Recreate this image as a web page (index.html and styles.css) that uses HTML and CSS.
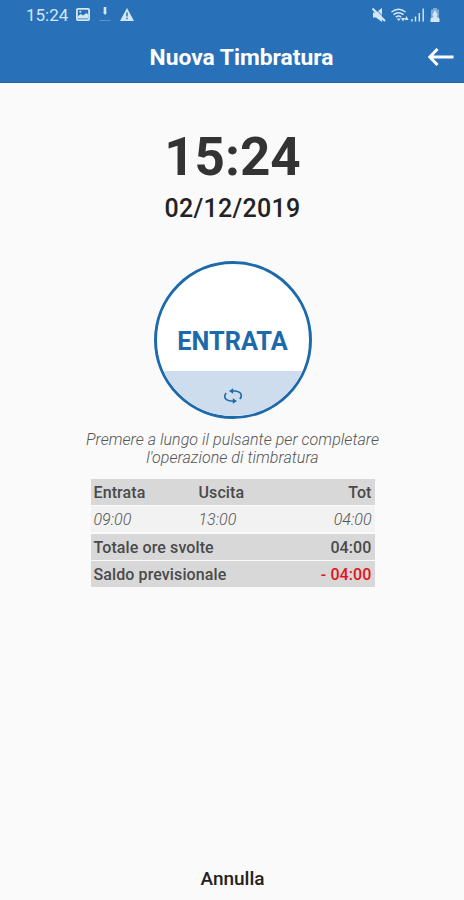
FILE: index.html
```html
<!DOCTYPE html>
<html lang="it">
<head>
    <meta charset="UTF-8">
    <meta name="viewport" content="width=device-width, initial-scale=1.0">
    <title>Nuova Timbratura</title>
    <link rel="stylesheet" href="styles.css">
</head>
<body>

<header class="header">
    <div class="status-bar">
        <span class="status-time">15:24</span>
        <svg class="icon-image" width="14" height="13" viewBox="0 0 14 13">
            <rect x="0.9" y="0.9" width="12.2" height="11.2" rx="1" fill="none" stroke="currentColor" stroke-width="1.8"/>
            <path d="M2 10.5V8l3-2 2 1.5L10.500 5 12 6.500v4z" fill="currentColor"/>
            <circle cx="4.300" cy="3.800" r="1" fill="currentColor"/>
        </svg>
        <svg class="icon-download" width="12" height="15" viewBox="0 0 12 15">
            <path d="M4.700 0h2.600v5.500h0.700L6 8 4 5.500h0.700z" fill="currentColor"/>
            <path d="M0.500 13.500h11" stroke="currentColor" opacity="0.3"/>
        </svg>
        <svg class="icon-warning" width="14" height="13" viewBox="0 0 14 13">
            <path d="M7 0l7 13H0z" fill="currentColor"/>
            <path d="M7 4.500v4M7 9.700v1.600" stroke="#2871b8" stroke-width="1.500"/>
        </svg>
        <div class="status-right">
            <svg width="14" height="14" viewBox="0 0 14 14">
                <path d="M1 4.500h3L10 0v14L4 9.500H1z" fill="currentColor"/>
                <path d="M2.500 0l12 12" stroke="#2871b8" stroke-width="1"/>
                <path d="M0.500 0.500l12.500 12.500" stroke="currentColor" stroke-width="2"/>
            </svg>
            <svg class="icon-wifi" width="18" height="14" viewBox="0 0 18 14">
                <g fill="none" stroke="currentColor" stroke-width="1.500">
                    <path d="M0.500 4q7-5.500 14 0"/>
                    <path d="M2.500 6.700q5-4 10 0"/>
                    <path d="M4.800 9.200q2.700-2.200 5.400 0"/>
                </g>
                <path d="M5.700 10.500h4L7.700 13z" fill="currentColor"/>
                <path d="M10 10L12 13.500 14 10zM13.500 12L15.500 8 17.500 12z" fill="currentColor"/>
            </svg>
            <svg class="icon-signal" width="14" height="14" viewBox="0 0 14 14">
                <path d="M1 11v2.500M4.500 8.500v5M8.300 5v8.500M12.200 0.500v13" stroke="currentColor" stroke-width="1.400"/>
            </svg>
            <svg class="icon-battery" width="10" height="14" viewBox="0 0 10 14">
                <path d="M3 0h4v1.500h2V14H1V1.500h2z" fill="currentColor" opacity="0.500"/>
                <path d="M5 2l2.500 4.500L6.500 9 9.500 10.500V14h-9v-3.500L3.500 9l-1-2.500z" fill="currentColor"/>
            </svg>
        </div>
    </div>
    <div class="title-bar">
        <h1>Nuova Timbratura</h1>
        <svg class="back-arrow" width="27" height="20" viewBox="0 0 27 20">
            <path d="M25.500 10H2.500M9.500 2L1.800 10l7.700 8" fill="none" stroke="#fff" stroke-width="3"/>
        </svg>
    </div>
</header>

<main class="content">
    <div class="clock">15:24</div>
    <div class="date">02/12/2019</div>

    <button class="stamp-button" type="button">
        <span class="stamp-label">ENTRATA</span>
        <span class="stamp-switch">
            <svg width="20" height="16" viewBox="0 0 20 16">
                <g fill="none" stroke="#1c69ab" stroke-width="1.700">
                    <path d="M8 3h4.500q5.500 0.800 5.800 4.500 0 2-1.500 3.500"/>
                    <path d="M12 13H7.500Q2 12.200 1.700 8.500q0-2 1.500-3.500"/>
                </g>
                <path d="M10.200 0.300v5.400L6 3zM9.800 10.300v5.400L14 13z" fill="#1c69ab"/>
            </svg>
        </span>
    </button>

    <p class="hint">Premere a lungo il pulsante per completare<br>l'operazione di timbratura</p>

    <div class="summary">
        <div class="row bold">
            <span>Entrata</span><span>Uscita</span><span class="tot">Tot</span>
        </div>
        <div class="row times">
            <span>09:00</span><span>13:00</span><span class="tot">04:00</span>
        </div>
        <div class="row bold">
            <span class="wide">Totale ore svolte</span><span class="tot">04:00</span>
        </div>
        <div class="row bold">
            <span class="wide">Saldo previsionale</span><span class="tot negative">- 04:00</span>
        </div>
    </div>
</main>

<footer class="footer">Annulla</footer>

</body>
</html>
```
FILE: styles.css
```css
* {
    box-sizing: border-box;
}
body {
    font-family: Roboto, sans-serif;
    background-color: #fafafa;
    display: flex;
    flex-direction: column;
    height: 900px;
    margin: 0;
    color: #222;
}
.header {
    background-color: #2871b8;
    height: 83px;
    border-bottom: 1px solid #1763a9;
    color: #d3e7f6;
}
.status-bar {
    display: flex;
    align-items: center;
    height: 29px;
    padding: 0 24px 0 26px;
}
.status-time {
    font-size: 17px;
    line-height: 29px;
    width: 50px;
    padding-top: 1px;
}
.icon-download {
    margin-left: 9px;
}
.icon-warning {
    margin-left: 9px;
}
.status-right {
    display: flex;
    align-items: center;
    margin-left: auto;
}
.icon-wifi {
    margin-left: 5px;
}
.icon-signal {
    margin-left: 2px;
}
.icon-battery {
    margin-left: 5px;
}
.title-bar {
    display: grid;
    grid-template-columns: 1fr auto 1fr;
    align-items: center;
    height: 54px;
    padding: 0 9px;
}
h1 {
    grid-column: 2;
    margin: 2px 0 0 19px;
    font-size: 22.8px;
    line-height: 54px;
    color: #fff;
}
.back-arrow {
    justify-self: end;
}
.content {
    flex: 1;
    display: flex;
    flex-direction: column;
    align-items: center;
    padding-left: 1px;
}
.clock {
    margin-top: 43px;
    font-size: 53px;
    font-weight: bold;
    line-height: 62px;
    color: #333;
}
.date {
    margin-top: 5px;
    font-size: 25px;
    font-weight: 500;
    line-height: 32px;
    letter-spacing: 0.3px;
}
.stamp-button {
    display: flex;
    flex-direction: column;
    width: 158px;
    height: 158px;
    margin-top: 36px;
    padding: 0;
    border: 3px solid #1c69ab;
    border-radius: 50%;
    background-color: #fff;
    overflow: hidden;
    font-family: inherit;
}
.stamp-label {
    width: 100%;
    height: 107px;
    padding-top: 62px;
    font-size: 25.300px;
    font-weight: bold;
    line-height: 32px;
    color: #1c69ab;
}
.stamp-switch {
    display: flex;
    justify-content: center;
    width: 100%;
    flex: 1;
    padding-top: 17px;
    background-color: #cddded;
}
.hint {
    margin: 12px 0 0;
    font-size: 16px;
    font-style: italic;
    font-weight: 300;
    line-height: 18px;
    letter-spacing: 0.05px;
    text-align: center;
    color: #555;
}
.summary {
    display: grid;
    gap: 1.4px;
    width: 284px;
    margin-top: 12px;
}
.row {
    display: grid;
    grid-template-columns: 105px 1fr 1fr;
    height: 26px;
    padding: 0 3px;
    font-size: 16px;
    line-height: 27px;
    color: #4a4a4a;
    background-color: #f2f2f2;
}
.bold {
    font-weight: 500;
    letter-spacing: 0.1px;
    background-color: #d8d8d8;
}
.times {
    font-style: italic;
    font-weight: 300;
    color: #555;
}
.wide {
    grid-column: span 2;
}
.tot {
    text-align: right;
}
.negative {
    color: #e3131b;
}
.footer {
    height: 43px;
    padding-left: 1px;
    font-size: 19px;
    font-weight: 500;
    line-height: 43px;
    text-align: center;
}
```
